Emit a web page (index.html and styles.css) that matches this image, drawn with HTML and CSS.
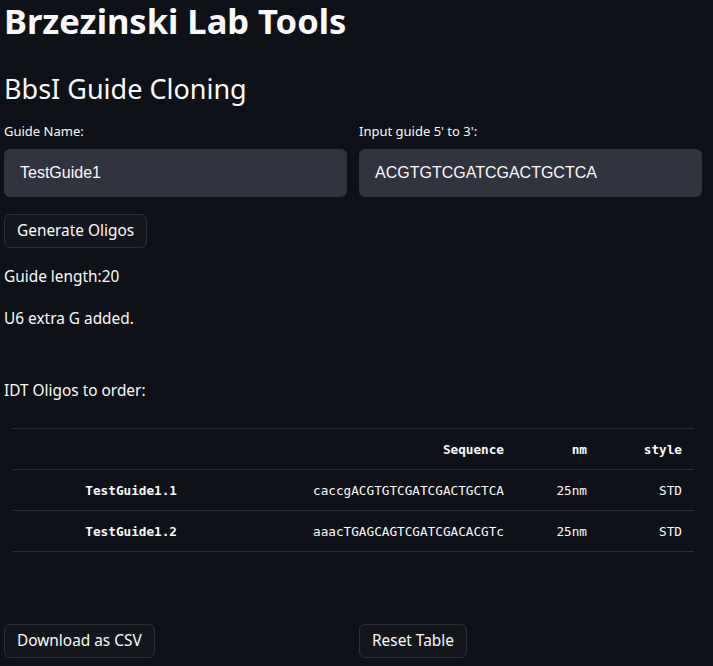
FILE: index.html
```html
<!DOCTYPE html>
<html>
<head>
<meta charset="utf-8">
<link rel="stylesheet" href="styles.css">
</head>
<body>
<main class="app">
  <h1 class="title">Brzezinski Lab Tools</h1>
  <h2 class="subtitle">BbsI Guide Cloning</h2>
  <div class="cols">
    <div class="field">
      <label class="label">Guide Name:</label>
      <div class="input">TestGuide1</div>
    </div>
    <div class="field">
      <label class="label">Input guide 5' to 3':</label>
      <div class="input">ACGTGTCGATCGACTGCTCA</div>
    </div>
  </div>
  <div class="btn-row"><button class="btn">Generate Oligos</button></div>
  <p class="text t1">Guide length:20</p>
  <p class="text t2">U6 extra G added.</p>
  <p class="text t3">IDT Oligos to order:</p>
  <table class="tbl">
    <thead>
      <tr><th class="c1"></th><th class="c2">Sequence</th><th class="c3">nm</th><th class="c4">style</th></tr>
    </thead>
    <tbody>
      <tr><th class="c1">TestGuide1.1</th><td class="c2">caccgACGTGTCGATCGACTGCTCA</td><td class="c3">25nm</td><td class="c4">STD</td></tr>
      <tr><th class="c1">TestGuide1.2</th><td class="c2">aaacTGAGCAGTCGATCGACACGTc</td><td class="c3">25nm</td><td class="c4">STD</td></tr>
    </tbody>
  </table>
  <div class="cols bottom">
    <div><button class="btn">Download as CSV</button></div>
    <div><button class="btn">Reset Table</button></div>
  </div>
</main>
</body>
</html>
```
FILE: styles.css
```css
html, body {
  margin: 0;
  padding: 0;
  background: #0e1117;
  color: #fafafa;
  font-family: "Noto Sans", "Open Sans", sans-serif;
}
.app {
  width: 698px;
  padding: 0 4px;
}
.title {
  margin: 0;
  padding-top: 1px;
  font-size: 34.5px;
  font-weight: 700;
  line-height: 40px;
}
.subtitle {
  margin: 30px 0 0;
  font-size: 27px;
  font-weight: 400;
  line-height: 36px;
}
.cols {
  display: grid;
  grid-template-columns: 1fr 1fr;
  column-gap: 12px;
}
.field {
  display: flex;
  flex-direction: column;
}
.label {
  margin-top: 14px;
  font-size: 13px;
  line-height: 20px;
  height: 20px;
}
.input {
  margin-top: 8px;
  height: 48px;
  box-sizing: border-box;
  background: #31333f;
  border-radius: 6px;
  padding: 0 16px;
  display: flex;
  align-items: center;
  font-family: "Liberation Sans", Arial, sans-serif;
  font-size: 16px;
  color: #fafafa;
}
.btn-row {
  margin-top: 17px;
}
.btn {
  height: 34px;
  box-sizing: border-box;
  padding: 0 12px;
  background: #13161d;
  border: 1px solid #2c2f37;
  border-radius: 6px;
  color: #fafafa;
  font-family: "Noto Sans", "Open Sans", sans-serif;
  font-size: 15.4px;
  line-height: 32px;
}
.text {
  margin: 0;
  font-size: 15.4px;
  line-height: 24px;
}
.t1 { margin-top: 17px; }
.t2 { margin-top: 18px; }
.t3 { margin-top: 48px; }
.tbl {
  margin: 25px 8px 0;
  width: 682px;
  border-collapse: collapse;
  font-family: "DejaVu Sans Mono", "Liberation Mono", monospace;
  font-size: 12.7px;
  color: #fafafa;
}
.tbl th, .tbl td {
  height: 40px;
  padding: 0 12px;
  text-align: right;
  border-top: 1px solid #2a2d33;
  border-bottom: 1px solid #2a2d33;
}
.tbl th { font-weight: 700; }
.tbl td { font-weight: 400; }
.c1 { width: 153px; }
.c2 { width: 303px; }
.c3 { width: 59px; }
.c4 { width: 71px; }
.bottom {
  margin-top: 72px;
}
```
